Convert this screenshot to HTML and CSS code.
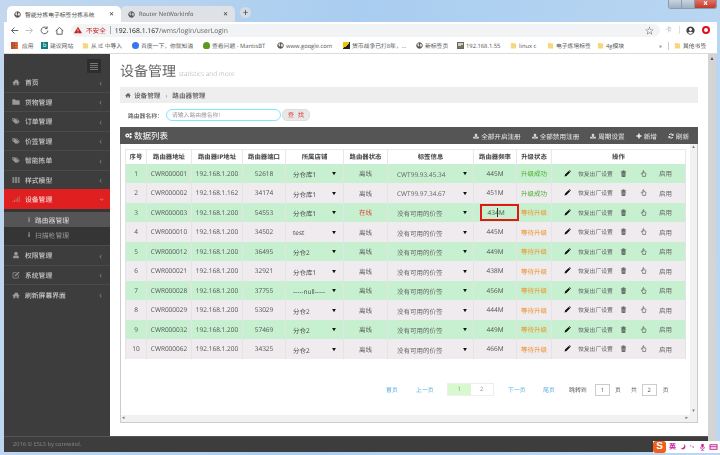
FILE: index.html
```html
<!DOCTYPE html>
<html lang="zh">
<head>
<meta charset="utf-8">
<title>智能分拣电子标签分拣系统</title>
<link rel="stylesheet" href="styles.css">
</head>
<body>
<svg class="defs" width="0" height="0" aria-hidden="true">
  <symbol id="i-home" viewBox="0 0 24 24"><path d="M12 4 1 14l1.500 1.500L4 14v8h6v-6h4v6h6v-8l1.500 1.500L23 14 18 9.500V5h-3v1.800z"/></symbol>
  <symbol id="i-folder" viewBox="0 0 24 24"><path d="M1 5.500C1 4.500 1.800 4 2.500 4H9l2 3h10.500c.8 0 1.500.7 1.500 1.500V20H1z"/></symbol>
  <symbol id="i-tags" viewBox="0 0 24 24"><path fill-rule="evenodd" d="M1 4h8l10 10-7 7L1 11zm4 2.500a1.800 1.800 0 1 0 .01 0z"/><path d="M12 4h2l9 10-7 7-1.500-1.500L19.500 14z"/></symbol>
  <symbol id="i-th" viewBox="0 0 24 24"><path d="M1 4h6v4H1zm8 0h6v4H9zm8 0h6v4h-6zM1 10h6v4H1zm8 0h6v4H9zm8 0h6v4h-6zM1 16h6v4H1zm8 0h6v4H9zm8 0h6v4h-6z"/></symbol>
  <symbol id="i-signal" viewBox="0 0 24 24"><path d="M1 18h3v3H1zm5-3h3v6H6zm5-4h3v10h-3zm5-4h3v14h-3zm5-4h2v18h-2z"/></symbol>
  <symbol id="i-user" viewBox="0 0 24 24"><circle cx="12" cy="8" r="5.500"/><path d="M3 22c0-6 2-8 5-8.500 2.500 1.500 5.500 1.500 8 0 3 .5 5 2.500 5 8.500z"/></symbol>
  <symbol id="i-edit" viewBox="0 0 24 24"><path fill="none" stroke="currentColor" stroke-width="2" d="M14 5H3v16h16V11"/><path d="M9 12 20 2l2.500 2.500L12 15l-3.500.5z"/></symbol>
  <symbol id="i-pencil" viewBox="0 0 24 24"><path d="m2 22 1.500-6.500L16 3l5 5L8.500 20.500zM17.500 1.500c1-1 2-1 3 0l2 2c1 1 1 2 0 3L22 7l-5-5z"/></symbol>
  <symbol id="i-trash" viewBox="0 0 24 24"><path fill-rule="evenodd" d="M9 2h6l1 2h5v2H3V4h5zM5 8h14l-1 15H6zm3 3v9h1.500v-9zm3.300 0v9h1.500v-9zm3.300 0v9h1.500v-9z"/></symbol>
  <symbol id="i-hand" viewBox="0 0 24 24"><path fill="none" stroke="currentColor" stroke-width="2" d="M9 22v-3l-4-6c-1-2 1-3 2.500-2L10 13V4c0-2.500 3-2.500 3 0v5l5 1c2 .5 2.500 1.500 2.500 3L19 19v3z"/></symbol>
  <symbol id="i-upload" viewBox="0 0 24 24"><path d="m12 2 7 7h-4v7H9V9H5zM1 15h6v3h10v-3h6v7H1z"/></symbol>
  <symbol id="i-plus" viewBox="0 0 24 24"><path d="M9 2h6v7h7v6h-7v7H9v-7H2V9h7z"/></symbol>
  <symbol id="i-refresh" viewBox="0 0 24 24"><path fill="none" stroke="currentColor" stroke-width="4" d="M20 9a9 9 0 0 0-16-1M4 15a9 9 0 0 0 16 1"/><path d="M22 2v9h-9zM2 22v-9h9z"/></symbol>
  <symbol id="i-cogs" viewBox="0 0 24 24"><path fill-rule="evenodd" d="M8 5a7 7 0 1 0 .01 0zm0 4.500a2.500 2.500 0 1 1-.01 0z"/><circle cx="19" cy="7" r="4"/><circle cx="19" cy="18" r="4"/></symbol>
  <symbol id="i-globe" viewBox="0 0 24 24"><path fill-rule="evenodd" d="M12 1a11 11 0 1 0 .01 0zM5 7l5-3 1 3-3 2 3 3-1 5-2-4-3-1zm10-2 4 3 1 6-4 4-1-5-3-2 3-2z"/></symbol>
  <symbol id="i-bmfolder" viewBox="0 0 24 24"><path d="M3 3h8l2 2h8v17H3z"/></symbol>
</svg>
<div class="window">
  <header class="tabstrip">
    <div class="tab tab-active"><svg class="ico9 c-globe"><use href="#i-globe"/></svg><span class="tab-title">智能分拣电子标签分拣系统</span><span class="tab-x">✕</span></div>
    <div class="tab tab-idle"><svg class="ico9 c-globe"><use href="#i-globe"/></svg><span class="tab-title">Router NetWorkInfo</span><span class="tab-x">✕</span></div>
    <span class="tab-new">+</span>
    <div class="winctl"><span class="win-btn"></span><span class="win-btn"></span><span class="win-close">x</span></div>
  </header>

  <div class="toolbar">
    <svg class="nav" viewBox="0 0 12 12"><path d="M11 6H2m4-4L2 6l4 4"/></svg>
    <svg class="nav nav-off" viewBox="0 0 12 12"><path d="M1 6h9M6 2l4 4-4 4"/></svg>
    <svg class="nav" viewBox="0 0 12 12"><path d="M10.500 6A4.500 4.500 0 1 1 9 2.500M9.500 .5v3h-3"/></svg>
    <svg class="nav" viewBox="0 0 12 12"><path d="M1 6.500 6 2l5 4.500M2.500 5.500V11h7V5.500"/></svg>
    <div class="omnibox">
      <svg class="warn" viewBox="0 0 12 12"><path d="M6 1 12 11H0z"/><path class="warn-mark" d="M5.500 4.500h1v3.500h-1zm0 4.300h1v1h-1z"/></svg>
      <span class="insecure">不安全</span><span class="omni-sep"></span>
      <span class="url"><b>192.168.1.167</b>/wms/login/userLogin</span>
      <span class="star">☆</span>
    </div>
    <span class="ext">卡</span><span class="tool-sep"></span>
    <svg class="avatar" viewBox="0 0 24 24"><path fill-rule="evenodd" d="M12 1a11 11 0 1 0 .01 0zm0 4a4 4 0 1 1-.01 0zm0 16c-3 0-5-1-6.500-3 1-2 4-3 6.500-3s5.500 1 6.500 3c-1.500 2-3.500 3-6.500 3z"/></svg>
    <span class="opera"></span>
  </div>

  <nav class="bookmarks">
    <span class="bm bm-apps"><span class="apps-grid"></span>应用</span>
    <span class="bm bm-w2"><span class="sq sq-bing">b</span>建议网站</span>
    <span class="bm bm-w3"><svg class="ico9 c-folder"><use href="#i-bmfolder"/></svg>从 IE 中导入</span>
    <span class="bm bm-w4"><span class="dot-baidu"></span>百度一下，你就知道</span>
    <span class="bm bm-w5"><span class="dot-frog"></span>查看问题 - MantisBT</span>
    <span class="bm bm-w6"><svg class="ico9 c-globe"><use href="#i-globe"/></svg>www.google.com</span>
    <span class="bm bm-w7"><span class="sq sq-game"></span>货币战争已打8年，...</span>
    <span class="bm bm-w8"><svg class="ico9 c-globe"><use href="#i-globe"/></svg>新标签页</span>
    <span class="bm bm-w9"><span class="sq sq-img"></span>192.168.1.55</span>
    <span class="bm bm-w10"><svg class="ico9 c-folder"><use href="#i-bmfolder"/></svg>linux c</span>
    <span class="bm bm-w11"><svg class="ico9 c-folder"><use href="#i-bmfolder"/></svg>电子炼塔标签</span>
    <span class="bm bm-w12"><svg class="ico9 c-folder"><use href="#i-bmfolder"/></svg>4g模块</span>
    <span class="bm-more">»</span><span class="bm-sep"></span>
    <span class="bm"><svg class="ico9 c-folder"><use href="#i-bmfolder"/></svg>其他书签</span>
  </nav>

  <div class="shell">
    <aside class="sidebar">
      <div class="side-top"><span class="burger"><i></i><i></i><i></i><i></i></span></div>
      <ul class="menu">
        <li class="item"><svg class="mi"><use href="#i-home"/></svg><span>首页</span><em>‹</em></li>
        <li class="item"><svg class="mi"><use href="#i-folder"/></svg><span>货物管理</span><em>‹</em></li>
        <li class="item"><svg class="mi"><use href="#i-tags"/></svg><span>订单管理</span><em>‹</em></li>
        <li class="item"><svg class="mi"><use href="#i-tags"/></svg><span>价签管理</span><em>‹</em></li>
        <li class="item"><svg class="mi"><use href="#i-tags"/></svg><span>智能拣单</span><em>‹</em></li>
        <li class="item"><svg class="mi"><use href="#i-th"/></svg><span>样式模型</span><em>‹</em></li>
        <li class="item item-open"><svg class="mi"><use href="#i-signal"/></svg><span>设备管理</span><em class="down">‹</em></li>
        <li class="subs">
          <div class="sub sub-on"><i>i</i>路由器管理</div>
          <div class="sub"><i>i</i>扫描枪管理</div>
        </li>
        <li class="item"><svg class="mi"><use href="#i-user"/></svg><span>权限管理</span><em>‹</em></li>
        <li class="item"><svg class="mi"><use href="#i-edit"/></svg><span>系统管理</span><em>‹</em></li>
        <li class="item item-last"><svg class="mi"><use href="#i-home"/></svg><span>刷新屏幕界面</span><em>‹</em></li>
      </ul>
    </aside>

    <main class="main">
      <h1 class="page-title">设备管理 <small>statistics and more</small></h1>
      <div class="crumbs"><svg class="crumb-ico"><use href="#i-home"/></svg>设备管理<span class="crumb-sep">›</span>路由器管理</div>
      <div class="search">
        <label class="search-label">路由器名称：</label>
        <span class="search-input">请输入路由器名称!</span>
        <span class="search-btn">查 找</span>
      </div>
      <section class="panel">
        <div class="panel-head">
          <div class="panel-title"><svg class="pt-ico"><use href="#i-cogs"/></svg>数据列表</div>
          <div class="panel-tools">
            <span class="tool"><svg class="tool-ico"><use href="#i-upload"/></svg>全部开启注册</span>
            <span class="tool"><svg class="tool-ico"><use href="#i-upload"/></svg>全部禁用注册</span>
            <span class="tool"><svg class="tool-ico"><use href="#i-upload"/></svg>周期设置</span>
            <span class="tool"><svg class="tool-ico"><use href="#i-plus"/></svg>新增</span>
            <span class="tool"><svg class="tool-ico"><use href="#i-refresh"/></svg>刷新</span>
          </div>
        </div>
        <div class="panel-body">
          <div class="scroll-area">
            <table class="grid">
              <colgroup><col class="c1"><col class="c2"><col class="c3"><col class="c4"><col class="c5"><col class="c6"><col class="c7"><col class="c8"><col class="c9"><col class="c10"></colgroup>
              <thead><tr><th>序号</th><th>路由器地址</th><th>路由器IP地址</th><th>路由器端口</th><th>所属店铺</th><th>路由器状态</th><th>标签信息</th><th>路由器频率</th><th>升级状态</th><th>操作</th></tr></thead>
              <tbody>
                <tr><td>1</td><td>CWR000001</td><td>192.168.1.200</td><td>52618</td><td><div class="sel">分仓库1<b>▼</b></div></td><td>离线</td><td><div class="sel sel-wide">CWT99.93.45.34<b>▼</b></div></td><td>445M</td><td class="st-ok">升级成功</td><td><div class="ops"><svg class="op-pen"><use href="#i-pencil"/></svg><span class="op-reset">恢复出厂设置</span><svg class="op-ico"><use href="#i-trash"/></svg><svg class="op-ico op-hand"><use href="#i-hand"/></svg><span class="op-use">启用</span></div></td></tr>
                <tr><td>2</td><td>CWR000002</td><td>192.168.1.162</td><td>34174</td><td><div class="sel">分仓库1<b>▼</b></div></td><td>离线</td><td><div class="sel sel-wide">CWT99.97.34.67<b>▼</b></div></td><td>451M</td><td class="st-ok">升级成功</td><td><div class="ops"><svg class="op-pen"><use href="#i-pencil"/></svg><span class="op-reset">恢复出厂设置</span><svg class="op-ico"><use href="#i-trash"/></svg><svg class="op-ico op-hand"><use href="#i-hand"/></svg><span class="op-use">启用</span></div></td></tr>
                <tr><td>3</td><td>CWR000003</td><td>192.168.1.200</td><td>54553</td><td><div class="sel">分仓库1<b>▼</b></div></td><td class="st-on">在线</td><td><div class="sel sel-wide">没有可用的价签<b>▼</b></div></td><td><span class="freq-box">434M<i class="caret"></i></span></td><td class="st-wait">等待升级</td><td><div class="ops"><svg class="op-pen"><use href="#i-pencil"/></svg><span class="op-reset">恢复出厂设置</span><svg class="op-ico"><use href="#i-trash"/></svg><svg class="op-ico op-hand"><use href="#i-hand"/></svg><span class="op-use">启用</span></div></td></tr>
                <tr><td>4</td><td>CWR000010</td><td>192.168.1.200</td><td>34502</td><td><div class="sel">test<b>▼</b></div></td><td>离线</td><td><div class="sel sel-wide">没有可用的价签<b>▼</b></div></td><td>445M</td><td class="st-wait">等待升级</td><td><div class="ops"><svg class="op-pen"><use href="#i-pencil"/></svg><span class="op-reset">恢复出厂设置</span><svg class="op-ico"><use href="#i-trash"/></svg><svg class="op-ico op-hand"><use href="#i-hand"/></svg><span class="op-use">启用</span></div></td></tr>
                <tr><td>5</td><td>CWR000012</td><td>192.168.1.200</td><td>36495</td><td><div class="sel">分仓2<b>▼</b></div></td><td>离线</td><td><div class="sel sel-wide">没有可用的价签<b>▼</b></div></td><td>449M</td><td class="st-wait">等待升级</td><td><div class="ops"><svg class="op-pen"><use href="#i-pencil"/></svg><span class="op-reset">恢复出厂设置</span><svg class="op-ico"><use href="#i-trash"/></svg><svg class="op-ico op-hand"><use href="#i-hand"/></svg><span class="op-use">启用</span></div></td></tr>
                <tr><td>6</td><td>CWR000021</td><td>192.168.1.200</td><td>32921</td><td><div class="sel">分仓库1<b>▼</b></div></td><td>离线</td><td><div class="sel sel-wide">没有可用的价签<b>▼</b></div></td><td>438M</td><td class="st-wait">等待升级</td><td><div class="ops"><svg class="op-pen"><use href="#i-pencil"/></svg><span class="op-reset">恢复出厂设置</span><svg class="op-ico"><use href="#i-trash"/></svg><svg class="op-ico op-hand"><use href="#i-hand"/></svg><span class="op-use">启用</span></div></td></tr>
                <tr><td>7</td><td>CWR000028</td><td>192.168.1.200</td><td>37755</td><td><div class="sel">-----null-----<b>▼</b></div></td><td>离线</td><td><div class="sel sel-wide">没有可用的价签<b>▼</b></div></td><td>456M</td><td class="st-wait">等待升级</td><td><div class="ops"><svg class="op-pen"><use href="#i-pencil"/></svg><span class="op-reset">恢复出厂设置</span><svg class="op-ico"><use href="#i-trash"/></svg><svg class="op-ico op-hand"><use href="#i-hand"/></svg><span class="op-use">启用</span></div></td></tr>
                <tr><td>8</td><td>CWR000029</td><td>192.168.1.200</td><td>53029</td><td><div class="sel">分仓2<b>▼</b></div></td><td>离线</td><td><div class="sel sel-wide">没有可用的价签<b>▼</b></div></td><td>444M</td><td class="st-wait">等待升级</td><td><div class="ops"><svg class="op-pen"><use href="#i-pencil"/></svg><span class="op-reset">恢复出厂设置</span><svg class="op-ico"><use href="#i-trash"/></svg><svg class="op-ico op-hand"><use href="#i-hand"/></svg><span class="op-use">启用</span></div></td></tr>
                <tr><td>9</td><td>CWR000032</td><td>192.168.1.200</td><td>57469</td><td><div class="sel">分仓2<b>▼</b></div></td><td>离线</td><td><div class="sel sel-wide">没有可用的价签<b>▼</b></div></td><td>449M</td><td class="st-wait">等待升级</td><td><div class="ops"><svg class="op-pen"><use href="#i-pencil"/></svg><span class="op-reset">恢复出厂设置</span><svg class="op-ico"><use href="#i-trash"/></svg><svg class="op-ico op-hand"><use href="#i-hand"/></svg><span class="op-use">启用</span></div></td></tr>
                <tr><td>10</td><td>CWR000062</td><td>192.168.1.200</td><td>34325</td><td><div class="sel">分仓2<b>▼</b></div></td><td>离线</td><td><div class="sel sel-wide">没有可用的价签<b>▼</b></div></td><td>466M</td><td class="st-wait">等待升级</td><td><div class="ops"><svg class="op-pen"><use href="#i-pencil"/></svg><span class="op-reset">恢复出厂设置</span><svg class="op-ico"><use href="#i-trash"/></svg><svg class="op-ico op-hand"><use href="#i-hand"/></svg><span class="op-use">启用</span></div></td></tr>
              </tbody>
            </table>
            <div class="pager">
              <a class="pg-link pg-w12">首页</a>
              <a class="pg-link pg-w17 m18">上一页</a>
              <span class="pg-group m14"><span class="pg-num pg-cur">1</span><span class="pg-num">2</span></span>
              <a class="pg-link pg-w17 m14">下一页</a>
              <a class="pg-link pg-w12 m18">尾页</a>
              <span class="pg-text pg-w18 m14">跳转到</span>
              <span class="pg-input m8">1</span>
              <span class="pg-text m5">页</span>
              <span class="pg-text m10">共</span>
              <span class="pg-input m5">2</span>
              <span class="pg-text m6">页</span>
            </div>
          </div>
          <div class="vscroll"><span>▴</span><span>▾</span></div>
        </div>
        <div class="hscroll"><span>◂</span><span>▸</span></div>
      </section>
    </main>

    <div class="page-scroll"><span>▴</span></div>
    <footer class="footer">2016 © ESLS by corewind.</footer>
  </div>
</div>
<div class="ime">
  <span class="ime-logo">S</span>
  <span class="ime-ch">英</span>
  <svg class="ime-ico" viewBox="0 0 12 12"><path d="M9 1c1 4-1 7-6 8 3 2 8 1 8-4 0-2-1-3-2-4z"/></svg>
  <svg class="ime-ico" viewBox="0 0 12 12"><circle cx="3" cy="4" r="1"/><circle cx="7" cy="6" r="1.200"/></svg>
  <svg class="ime-ico" viewBox="0 0 12 12"><path d="M4 1h4v6H4zM2 6h1c0 4 6 4 6 0h1c0 3-2 4-3.500 4.300V11H9v1H3v-1h2.500v-.7C4 10 2 9 2 6z"/></svg>
  <svg class="ime-ico ime-kb" viewBox="0 0 12 12"><path fill-rule="evenodd" d="M0 2h12v8H0zm1.500 1.500v1.500h9V3.500zm0 3v2h9v-2z"/></svg>
</div>
</body>
</html>
```
FILE: styles.css
```css
* { box-sizing: border-box; margin: 0; padding: 0; }
html, body { width: 720px; height: 455px; overflow: hidden; }
body {
  position: relative;
  font-family: "Open Sans", "Noto Sans CJK SC", sans-serif;
  font-size: 6.5px;
  color: #555;
  text-rendering: geometricPrecision;
  background: linear-gradient(100deg, #c3d8ee 0%, #a9cdf0 45%, #bcd8f2 100%);
}
.defs { position: absolute; }
svg { fill: currentColor; flex: none; }
.window { height: 455px; padding: 0 3px 3px 4px; display: flex; flex-direction: column; filter: blur(.4px); }

/* tab strip */
.tabstrip { height: 22px; padding: 6px 0 0 3px; display: flex; align-items: stretch; }
.tab { width: 114px; padding: 0 7px 0 7px; display: flex; align-items: center; gap: 4px; border-radius: 5px 5px 0 0; font-size: 5.800px; }
.tab-active { background: #fff; color: #444; }
.tab-idle { background: #dee1e6; color: #555; }
.tab-title { flex: 1; white-space: nowrap; overflow: hidden; }
.tab-x { font-size: 6px; color: #333; }
.ico9 { width: 7px; height: 7px; }
.c-globe { color: #555; }
.c-folder { color: #f6d77e; }
.tab-new { width: 11px; height: 11px; margin: 1px 0 0 5px; border-radius: 50%; background: #d5dbe4; color: #333; font-size: 10px; line-height: 10px; text-align: center; }
.winctl { margin: -6px 0 0 auto; height: 9px; width: 49px; display: flex; border: 1px solid #8a9bb0; border-top: 0; border-radius: 0 0 3px 3px; overflow: hidden; background: #b8c6d6; }
.win-btn { width: 13px; border-right: 1px solid #8a9bb0; background: linear-gradient(#c9d3df, #9fb0c2); }
.win-close { flex: 1; background: linear-gradient(#dc7468, #c0392b); color: #fff; font-size: 7px; line-height: 7px; text-align: center; font-weight: 700; }

/* toolbar */
.toolbar { height: 16px; background: #fff; display: flex; align-items: center; padding-left: 6px; }
.nav { width: 9px; height: 9px; margin-right: 6px; fill: none; stroke: #555; stroke-width: 1.200; }
.nav-off { stroke: #bbb; }
.omnibox { width: 589px; margin-left: 1px; height: 13px; border-radius: 7px; background: #f1f3f4; display: flex; align-items: center; padding: 0 6px 0 3px; font-size: 6.800px; }
.warn { width: 8px; height: 8px; fill: #c5221f; }
.warn-mark { fill: #fff; }
.insecure { margin-left: 4px; color: #c5221f; font-size: 6.600px; }
.omni-sep { width: 1px; height: 8px; background: #aaa; margin: 0 4px; }
.url { color: #666; flex: 1; }
.url b { font-weight: 400; color: #222; }
.star { color: #444; font-size: 9px; }
.ext { margin-left: 5px; width: 9px; color: #bbb; font-size: 7px; }
.tool-sep { width: 1px; height: 8px; background: #ddd; margin: 0 5px; }
.avatar { width: 9px; height: 9px; color: #444; margin-left: 1px; }
.opera { width: 8px; height: 8px; margin-left: 7px; border-radius: 50%; border: 2.400px solid #e0101a; background: #fff; }

/* bookmarks */
.bookmarks { height: 16px; background: #fff; border-bottom: 1px solid #dcdcdc; display: flex; align-items: center; padding-left: 7px; font-size: 5.800px; color: #555; white-space: nowrap; }
.bm { display: inline-flex; align-items: center; gap: 2px; }
.bm-apps { width: 30px; gap: 4px; }
.bm-w2 { width: 41px; }
.bm-w3 { width: 50px; }
.bm-w4 { width: 71px; }
.bm-w5 { width: 74px; }
.bm-w6 { width: 66px; }
.bm-w7 { width: 73px; }
.bm-w8 { width: 41px; }
.bm-w9 { width: 53px; }
.bm-w10 { width: 37px; }
.bm-w11 { width: 50px; }
.bm-w12 { width: 62px; }
.bm-more { width: 9px; color: #444; }
.bm-sep { width: 1px; height: 8px; background: #ccc; margin-right: 5px; }
.apps-grid { width: 7px; height: 7px; background:
  radial-gradient(circle, #e33 0 1px, transparent 1px) 0 0/2.400px 2.400px,
  linear-gradient(90deg, #e33, #3a3, #fb2); }
.sq { width: 7px; height: 7px; display: inline-block; }
.sq-bing { background: #0f7c80; color: #fff; font-size: 6px; line-height: 7px; text-align: center; }
.sq-game { background: linear-gradient(135deg, #f3c300 50%, #222 50%); }
.sq-img { background: linear-gradient(160deg, #ccc 50%, #775 50%); border: 1px solid #666; }
.dot-baidu { width: 7px; height: 7px; border-radius: 50%; background: #3478f0; }
.dot-frog { width: 7px; height: 7px; border-radius: 50% 50% 40% 40%; background: #5a9a1e; }

/* shell */
.shell { flex: 1; min-height: 0; display: grid; grid-template-columns: 106px 598px 1fr; grid-template-rows: 1fr 16px; }
.sidebar { background: #3d3d3d; color: #c9c9c9; }
.side-top { height: 19px; padding: 5px 9px 0 0; display: flex; justify-content: flex-end; }
.burger { width: 14px; height: 14px; background: #2d2d2d; display: flex; flex-direction: column; justify-content: center; gap: 1px; padding: 0 3px; }
.burger i { height: 1px; background: #777; }
.menu { list-style: none; }
.item { height: 19.500px; display: flex; align-items: center; padding: 0 8px 0 8px; border-bottom: 1px solid #4a4a4a; font-size: 6.800px; color: #c9c9c9; font-weight: 500; }
.item-last { border-bottom: 0; }
.mi { width: 8px; height: 8px; margin-right: 5px; color: #999; }
.item span { flex: 1; }
.item em { font-style: normal; color: #888; font-size: 9px; line-height: 9px; }
.item-open { background: #e02020; border-bottom: 0; color: #f6d0d0; margin-top: -1px; height: 20px; }
.item-open .mi { color: #c46c6c; }
.item-open .down { color: #e88; transform: rotate(-90deg); }
.subs { background: #353535; padding: 3px 0 3px; border-bottom: 1px solid #4a4a4a; }
.sub { height: 15px; display: flex; align-items: center; padding-left: 24px; font-size: 6.800px; color: #999; }
.sub i { width: 7px; font-style: normal; color: #aaa; font-weight: 700; }
.sub-on { background: #555; color: #ddd; }

.main { background: #fff; padding: 0 10px; min-width: 0; }
.page-title { font-size: 14px; line-height: 16px; font-weight: 400; color: #666; padding: 10px 0 0; height: 33px; }
.page-title small { font-size: 6.600px; color: #aaa; font-weight: 300; margin-left: -1px; }
.crumbs { height: 16px; background: #eee; display: flex; align-items: center; padding-left: 5px; font-size: 6.600px; color: #555; font-weight: 500; }
.crumb-ico { width: 6px; height: 6px; margin-right: 3px; color: #666; }
.crumb-sep { margin: 0 5px; color: #777; }
.search { height: 24px; display: flex; align-items: center; padding-left: 8px; font-size: 5.800px; }
.search-label { width: 38px; color: #555; font-weight: 500; white-space: nowrap; }
.search-input { width: 115px; height: 12px; border: 1px solid #7fe9f5; border-radius: 6px; padding-left: 5px; line-height: 10px; color: #999; }
.search-btn { width: 28px; height: 12px; margin-left: 1px; background: #e8e8e8; border: 1px solid #ddd; border-radius: 5px; color: #e04040; line-height: 10px; text-align: center; font-size: 6.400px; word-spacing: 2px; }

.panel { height: 296px; border: 1px solid #ccc; border-top: 0; display: flex; flex-direction: column; }
.panel-head { height: 17px; margin: 0 -1px; background: #555; color: #eee; display: flex; align-items: center; justify-content: space-between; padding: 0 9px 0 5px; flex: none; }
.panel-title { display: flex; align-items: center; gap: 2px; font-size: 8.500px; color: #fff; }
.pt-ico { width: 7px; height: 7px; }
.panel-tools { display: flex; gap: 11px; font-size: 6.600px; }
.tool { display: flex; align-items: center; gap: 2px; }
.tool-ico { width: 6px; height: 6px; }
.panel-body { flex: 1; min-height: 0; display: flex; }
.scroll-area { flex: 1; min-width: 0; padding: 5px 0 0 4px; overflow: hidden; }
.vscroll { width: 7px; background: #f1f1f1; color: #777; font-size: 5px; line-height: 7px; text-align: center; display: flex; flex-direction: column; justify-content: space-between; }
.hscroll { height: 7px; background: #f1f1f1; color: #777; font-size: 5px; line-height: 7px; display: flex; justify-content: space-between; padding: 0 9px 0 1px; flex: none; }

.grid { width: 560px; table-layout: fixed; border-collapse: collapse; }
.c1 { width: 21px; } .c2 { width: 45px; } .c3 { width: 51px; } .c4 { width: 43px; } .c5 { width: 58px; }
.c6 { width: 44px; } .c7 { width: 86px; } .c8 { width: 43px; } .c9 { width: 35px; } .c10 { width: 134px; }
.grid th { height: 14px; font-weight: 700; color: #444; border: 1px solid #e8e8e8; border-bottom: 0; text-align: center; font-size: 6.400px; white-space: nowrap; padding: 0; }
.grid td { height: 19.500px; text-align: center; border: 1px solid #e4e4e4; border-width: 0 1px; color: #555; padding: 0; white-space: nowrap; font-size: 6.500px; }
.grid tbody tr:nth-child(odd) { background: #c6f0d0; }
.grid tbody tr:nth-child(even) { background: #efebef; }
.sel { display: flex; justify-content: space-between; align-items: center; padding: 2px 7px 0 7px; color: #444; }
.sel b { color: #111; font-size: 4px; font-weight: 400; }
.sel-wide { padding-left: 9px; padding-right: 6px; color: #666; }
.st-ok { color: #4caf2e !important; }
.st-wait { color: #f0922c !important; }
.st-on { color: #e8352e !important; }
.freq-box { display: inline-block; position: relative; left: 4px; width: 39px; height: 17px; line-height: 13px; padding-left: 6px; text-align: left; border: 2px solid #e21818; background: #c6f0d0; }
.caret { position: absolute; left: 15px; top: 2px; width: 1px; height: 9px; background: #333; }
.ops { display: flex; align-items: center; padding-left: 12px; color: #666; }
.op-pen { width: 7px; height: 7px; color: #111; }
.op-reset { margin-left: 7px; width: 39px; text-align: left; font-size: 5.800px; }
.op-ico { width: 7px; height: 7px; margin-left: 3px; color: #444; }
.op-hand { margin-left: 13px; }
.op-use { margin-left: 12px; }

.pager { height: 14px; margin-top: 24px; padding-left: 261px; display: flex; align-items: center; font-size: 5.900px; white-space: nowrap; }
.pg-link { color: #5aaee0; }
.pg-text { color: #555; }
.pg-w12 { width: 12px; }
.pg-w17 { width: 17px; }
.pg-w18 { width: 18px; }
.pg-group { display: flex; width: 47px; height: 13px; border: 1px solid #eee; }
.pg-num { flex: 1; text-align: center; line-height: 11px; color: #7a9ab8; }
.pg-cur { background: #d8f8cf; color: #79a36e; }
.pg-input { width: 15px; height: 12px; border: 1px solid #ccc; text-align: center; line-height: 10px; color: #555; }
.m5 { margin-left: 5px; } .m6 { margin-left: 6px; } .m8 { margin-left: 8px; } .m10 { margin-left: 10px; } .m14 { margin-left: 14px; } .m18 { margin-left: 18px; }

.page-scroll { grid-column: 3; grid-row: 1 / 3; background: #d4d4d4; width: 8px; color: #555; font-size: 6px; text-align: center; line-height: 8px; }
.footer { grid-column: 1 / 3; grid-row: 2; background: #3d3d3d; color: #8a8a8a; font-size: 5.700px; line-height: 15px; padding-left: 9px; border-top: 1px solid #555; }

/* input-method bar */
.ime { position: absolute; right: 0; bottom: 2px; width: 67px; height: 12px; background: #fff; display: flex; align-items: center; gap: 3px; color: #c8209c; }
.ime-logo { width: 13px; height: 12px; background: #f0601c; color: #fff; font: 700 10px/12px "Liberation Sans", sans-serif; text-align: center; border-radius: 3px; }
.ime-ch { font-size: 7px; font-weight: 700; }
.ime-ico { width: 7px; height: 8px; }
.ime-kb { width: 9px; }
```
